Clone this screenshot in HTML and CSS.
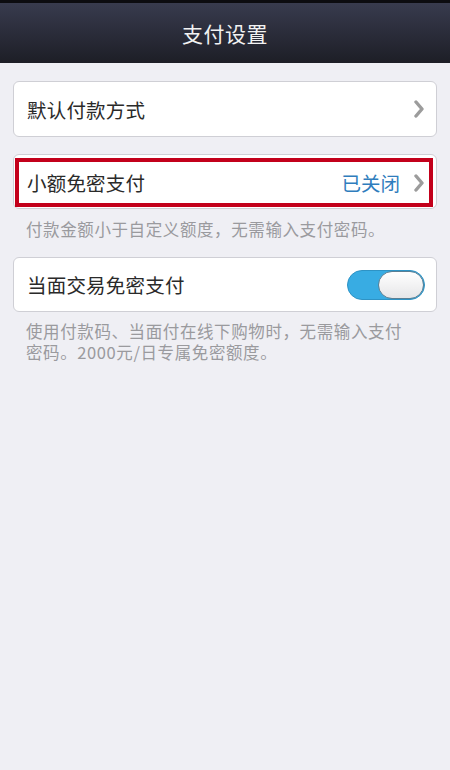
FILE: index.html
```html
<!DOCTYPE html>
<html lang="zh-CN">
<head>
<meta charset="utf-8">
<title>支付设置</title>
<link rel="stylesheet" href="styles.css">
</head>
<body>
<header class="topbar">
  <h1 class="title">支付设置</h1>
</header>
<main class="content">
  <div class="card card-first">
    <span class="label">默认付款方式</span>
    <svg class="chevron" viewBox="0 0 10 18" width="10" height="18"><path d="M2 2 L8 9 L2 16" fill="none" stroke="#9c9c9c" stroke-width="3.4" stroke-linecap="round" stroke-linejoin="round"/></svg>
  </div>

  <div class="card card-second">
    <span class="label">小额免密支付</span>
    <span class="status">已关闭</span>
    <svg class="chevron" viewBox="0 0 10 18" width="10" height="18"><path d="M2 2 L8 9 L2 16" fill="none" stroke="#9c9c9c" stroke-width="3.4" stroke-linecap="round" stroke-linejoin="round"/></svg>
    <div class="highlight"></div>
  </div>
  <p class="desc desc-first">付款金额小于自定义额度，无需输入支付密码。</p>

  <div class="card card-third">
    <span class="label">当面交易免密支付</span>
    <div class="toggle"><div class="knob"></div></div>
  </div>
  <p class="desc desc-wrap">使用付款码、当面付在线下购物时，无需输入支付密码。2000元/日专属免密额度。</p>
</main>
</body>
</html>
```

FILE: styles.css
```css
html, body {
  margin: 0;
  padding: 0;
}
body {
  width: 450px;
  height: 770px;
  background: #efeff4;
  font-family: "Noto Sans CJK SC", "Noto Sans", sans-serif;
  overflow: hidden;
}
.topbar {
  height: 60px;
  border-top: 3px solid #0c0c10;
  background: linear-gradient(#383b4e, #1d1e26);
  display: flex;
  align-items: center;
  justify-content: center;
}
.title {
  margin: 0;
  font-size: 21px;
  font-weight: normal;
  color: #f2f2f2;
  letter-spacing: 0.5px;
}
.content {
  padding: 18px 13px 0 13px;
  display: flex;
  flex-direction: column;
}
.card {
  position: relative;
  background: #fff;
  border: 1px solid #cfcfd5;
  border-radius: 6px;
  display: flex;
  align-items: center;
  padding: 0 12px 0 13px;
  box-sizing: border-box;
}
.card-first {
  height: 56px;
}
.card-second {
  height: 55px;
  margin-top: 17px;
  padding-top: 2px;
}
.card-third {
  height: 55px;
  margin-top: 17px;
}
.label {
  flex: 1;
  font-size: 19.5px;
  color: #2a2a2a;
  letter-spacing: 0.2px;
}
.status {
  font-size: 19.5px;
  color: #2f7dbd;
  margin-right: 14px;
}
.chevron {
  display: block;
}
.highlight {
  position: absolute;
  top: 3px;
  left: 1px;
  right: 3px;
  bottom: 1px;
  border: 4px solid #c3001b;
  pointer-events: none;
}
.desc {
  margin: 0 0 0 13px;
  font-size: 16.5px;
  line-height: 21px;
  letter-spacing: 0.6px;
  color: #9a9a9e;
}
.desc-first {
  margin-top: 10px;
}
.desc-wrap {
  margin-top: 9px;
  width: 390px;
}
.toggle {
  width: 78px;
  height: 30px;
  border-radius: 15px;
  background: #38ace3;
  box-sizing: border-box;
  border: 1px solid #2e93c5;
  display: flex;
  justify-content: flex-end;
  align-items: center;
  margin-right: -1px;
}
.knob {
  width: 46px;
  height: 28px;
  border-radius: 14px;
  background: linear-gradient(#ffffff, #e6e6e8);
  box-sizing: border-box;
  border: 1.5px solid #5b7f94;
}
```
